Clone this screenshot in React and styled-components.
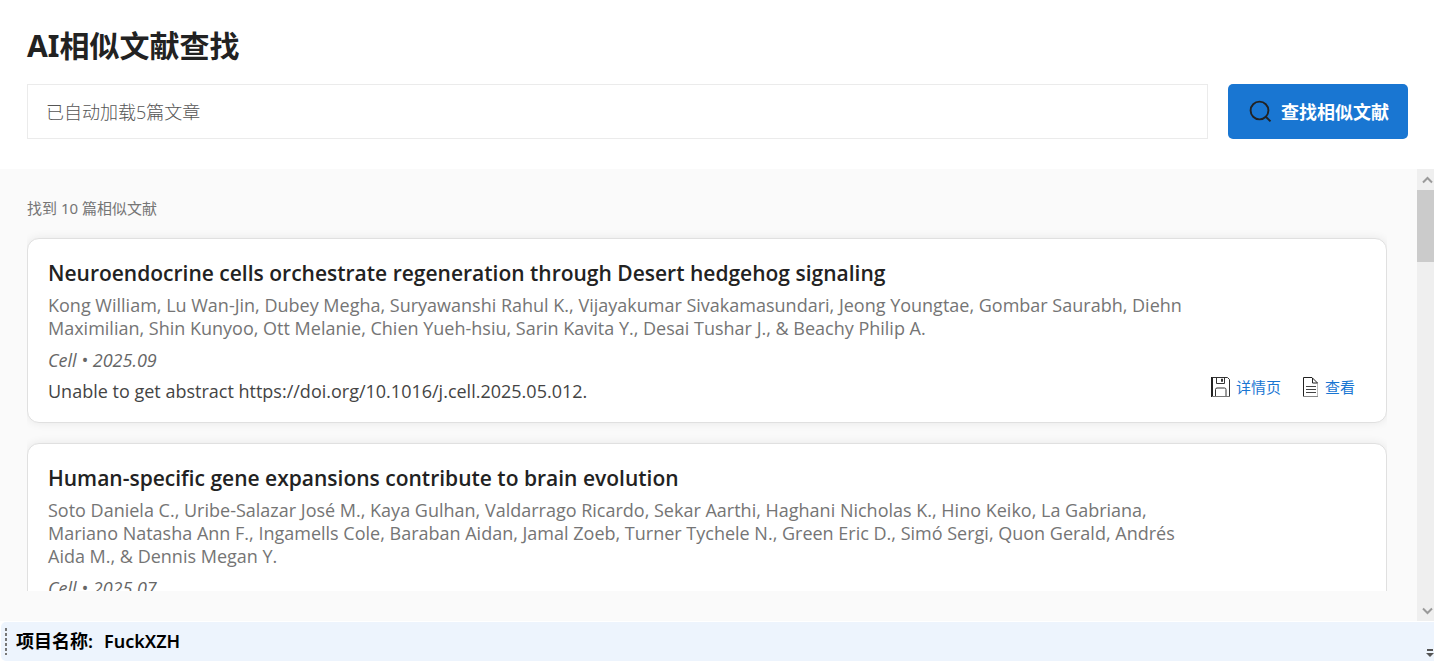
import React from 'react';
import styled, { createGlobalStyle } from 'styled-components';

const GlobalStyle = createGlobalStyle`
  *, *::before, *::after { box-sizing: border-box; }
  html, body { margin: 0; height: 100%; }
  body {
    background: #fff;
    color: #222;
    font-family: 'Noto Sans', 'Noto Sans CJK SC', sans-serif;
  }
  h1, h2, p, ul { margin: 0; padding: 0; }
`;

const Page = styled.div`
  display: flex;
  flex-direction: column;
  height: 100vh;
  overflow: hidden;
`;

const Header = styled.header`
  padding: 25px 26px 30px 27px;
`;

const Title = styled.h1`
  margin-bottom: 17px;
  font-size: 30px;
  line-height: 42px;
  font-weight: 700;
`;

const SearchForm = styled.form`
  display: flex;
  align-items: stretch;
  gap: 20px;
  height: 55px;
`;

const SearchInput = styled.input`
  flex: 1;
  min-width: 0;
  padding: 0 18px 2px;
  border: 1px solid #ebebeb;
  background: #fff;
  color: #555;
  font-family: 'Open Sans', 'Noto Sans CJK SC', sans-serif;
  font-size: 18px;
  font-weight: 300;
  outline: none;
`;

const SearchButton = styled.button`
  display: flex;
  align-items: center;
  gap: 8px;
  padding: 0 19px 2px 21px;
  border: 0;
  border-radius: 5px;
  background: #1976d2;
  color: #fff;
  font-family: 'Noto Sans CJK SC', sans-serif;
  font-size: 18px;
  font-weight: 700;
  white-space: nowrap;
  svg { color: #222; }
`;

const Results = styled.main`
  display: flex;
  flex: 1;
  min-height: 0;
  background: #fafafa;
`;

const ResultsBody = styled.div`
  display: flex;
  flex: 1;
  flex-direction: column;
  min-width: 0;
  padding: 27px 30px 30px 27px;
`;

const Count = styled.p`
  flex: none;
  height: 42px;
  color: #757575;
  font-size: 15px;
  line-height: 24px;
`;

const Viewport = styled.div`
  flex: 1;
  min-height: 0;
  margin-top: -10px;
  padding-top: 10px;
  overflow: hidden;
`;

const CardList = styled.ul`
  display: flex;
  flex-direction: column;
  gap: 20px;
  list-style: none;
`;

const Card = styled.li`
  display: flex;
  align-items: flex-end;
  gap: 16px;
  padding: 20px 31px 19px 20px;
  border: 1px solid #e0e0e0;
  border-radius: 12px;
  background: #fff;
  box-shadow: 0 0 10px rgba(0, 0, 0, 0.08);
  font-family: 'Open Sans', 'Noto Sans CJK SC', sans-serif;
`;

const CardText = styled.div`
  display: flex;
  flex: 1;
  flex-direction: column;
  min-width: 0;
`;

const CardTitle = styled.h2`
  margin-bottom: 7px;
  font-size: 21px;
  line-height: 28px;
  font-weight: 600;
`;

const Authors = styled.p`
  margin-bottom: 9px;
  color: #757575;
  font-size: 18px;
  line-height: 23px;
`;

const Source = styled.p`
  margin-bottom: 8px;
  color: #666;
  font-size: 18px;
  line-height: 22px;
  font-style: italic;
`;

const Abstract = styled.p`
  min-height: 24px;
  color: #444;
  font-size: 18px;
  line-height: 24px;
`;

const Actions = styled.div`
  display: flex;
  gap: 20px;
  padding-bottom: 4px;
`;

const ActionLink = styled.a`
  display: flex;
  align-items: center;
  gap: 4px;
  color: #1976d2;
  font-size: 15px;
  line-height: 24px;
  text-decoration: none;
  white-space: nowrap;
`;

const ScrollTrack = styled.div`
  display: flex;
  flex-direction: column;
  width: 17px;
  background: #efefef;
  color: #9a9a9a;
`;

const ScrollArrow = styled.span`
  display: flex;
  align-items: center;
  justify-content: flex-end;
  height: 21px;
`;

const ScrollThumb = styled.div`
  height: 72px;
  margin-bottom: auto;
  background: #cbcbcb;
`;

const Footer = styled.footer`
  display: flex;
  align-items: center;
  height: 39px;
  margin: 1px 0 0 1px;
  padding-left: 4px;
  border-radius: 5px 0 0 5px;
  background: #edf4fd;
  color: #000;
  font-size: 18px;
  line-height: 26px;
  font-weight: 600;
`;

const Grip = styled.span`
  width: 2px;
  height: 27px;
  margin-right: 9px;
  background: repeating-linear-gradient(#777 0 3px, transparent 3px 5px);
`;

const ProjectLabel = styled.span`
  padding-bottom: 2px;
`;

const ProjectName = styled.span`
  margin-left: 11px;
  padding-bottom: 2px;
`;

const Overflow = styled.svg`
  align-self: flex-end;
  margin: 0 0 3px auto;
`;

function SearchIcon() {
  return (
    <svg width="24" height="24" viewBox="0 0 24 24" fill="none" stroke="currentColor" strokeWidth="1.9" aria-hidden="true">
      <circle cx="10.500" cy="11.500" r="8.900" />
      <path d="M16.800 17.800 21.500 22.400" />
    </svg>
  );
}

function SaveIcon() {
  return (
    <svg width="21" height="22" viewBox="0 0 21 22" fill="none" stroke="#333" aria-hidden="true">
      <path d="M1 1v20" stroke="#222" strokeWidth="2" />
      <path d="M1 1.500h15.500L18.500 3.500v17" />
      <path d="M1 20.500h18" stroke="#777" />
      <path d="M5.500 1.500v6h8v-6M10.500 3v2.500h1V3z" />
      <path d="M4.500 20v-6.500q0-1.500 1.500-1.500h7.500q1.500 0 1.500 1.500V20" />
    </svg>
  );
}

function DocumentIcon() {
  return (
    <svg width="20" height="22" viewBox="0 0 20 22" fill="none" stroke="#222" aria-hidden="true">
      <path d="M16.500 7v13.500" stroke="#bbb" />
      <path d="M2 20.500h15" stroke="#888" />
      <path d="M2.500 20V1.500H11L16.500 7H11.500V2" />
      <path d="M5 10.500h10M5 13.500h10M5 16.500h10" stroke="#444" />
    </svg>
  );
}

const articles = [
  {
    title: 'Neuroendocrine cells orchestrate regeneration through Desert hedgehog signaling',
    authors:
      'Kong William, Lu Wan-Jin, Dubey Megha, Suryawanshi Rahul K., Vijayakumar Sivakamasundari, Jeong Youngtae, Gombar Saurabh, Diehn Maximilian, Shin Kunyoo, Ott Melanie, Chien Yueh-hsiu, Sarin Kavita Y., Desai Tushar J., & Beachy Philip A.',
    source: 'Cell • 2025.09',
    abstract: 'Unable to get abstract https://doi.org/10.1016/j.cell.2025.05.012.',
  },
  {
    title: 'Human-specific gene expansions contribute to brain evolution',
    authors:
      'Soto Daniela C., Uribe-Salazar José M., Kaya Gulhan, Valdarrago Ricardo, Sekar Aarthi, Haghani Nicholas K., Hino Keiko, La Gabriana, Mariano Natasha Ann F., Ingamells Cole, Baraban Aidan, Jamal Zoeb, Turner Tychele N., Green Eric D., Simó Sergi, Quon Gerald, Andrés Aida M., & Dennis Megan Y.',
    source: 'Cell • 2025.07',
  },
];

function ArticleCard({ article }) {
  return (
    <Card>
      <CardText>
        <CardTitle>{article.title}</CardTitle>
        <Authors>{article.authors}</Authors>
        <Source>{article.source}</Source>
        <Abstract>{article.abstract}</Abstract>
      </CardText>
      <Actions>
        <ActionLink href="#detail"><SaveIcon />详情页</ActionLink>
        <ActionLink href="#view"><DocumentIcon />查看</ActionLink>
      </Actions>
    </Card>
  );
}

export default function App() {
  return (
    <>
      <GlobalStyle />
      <Page>
        <Header>
          <Title>AI相似文献查找</Title>
          <SearchForm onSubmit={(e) => e.preventDefault()}>
            <SearchInput aria-label="文章" defaultValue="已自动加载5篇文章" />
            <SearchButton type="submit"><SearchIcon />查找相似文献</SearchButton>
          </SearchForm>
        </Header>
        <Results>
          <ResultsBody>
            <Count>找到 10 篇相似文献</Count>
            <Viewport>
              <CardList>
                {articles.map((a) => <ArticleCard key={a.title} article={a} />)}
              </CardList>
            </Viewport>
          </ResultsBody>
          <ScrollTrack aria-hidden="true">
            <ScrollArrow>
              <svg width="12" height="8" viewBox="0 0 12 8" fill="none" stroke="currentColor" strokeWidth="2"><path d="M1 6.500 5.500 2 10 6.500" /></svg>
            </ScrollArrow>
            <ScrollThumb />
            <ScrollArrow>
              <svg width="12" height="8" viewBox="0 0 12 8" fill="none" stroke="currentColor" strokeWidth="2"><path d="M1 1.500 5.500 6 10 1.500" /></svg>
            </ScrollArrow>
          </ScrollTrack>
        </Results>
        <Footer>
          <Grip />
          <ProjectLabel>项目名称:</ProjectLabel>
          <ProjectName>FuckXZH</ProjectName>
          <Overflow width="8" height="9" viewBox="0 0 8 9" fill="#555" aria-hidden="true">
            <path d="M1 0h6v2H1zM0 4h8L4 8z" />
          </Overflow>
        </Footer>
      </Page>
    </>
  );
}
